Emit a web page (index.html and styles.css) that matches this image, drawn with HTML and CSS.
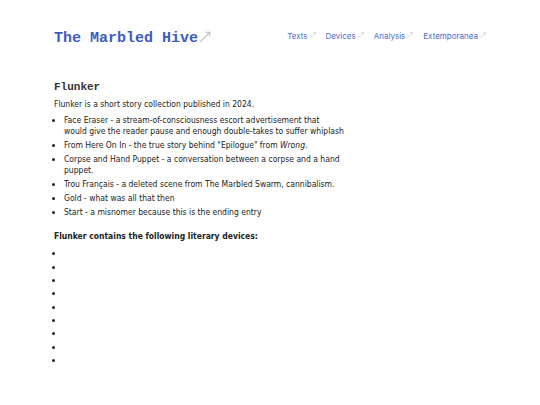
FILE: index.html
```html
<!DOCTYPE html>
<html>
<head>
<meta charset="utf-8">
<link rel="stylesheet" href="styles.css">
</head>
<body>
<header class="site-header">
  <a class="brand" href="#">The Marbled Hive<svg class="ext ext-brand" viewBox="0 0 10 10"><path d="M1 9 L9 1 M5.5 1 H9 V4.5" /></svg></a>
  <nav class="nav">
    <a href="#">Texts<svg class="ext" viewBox="0 0 10 10"><path d="M1 9 L9 1 M5.5 1 H9 V4.5" /></svg></a>
    <a href="#">Devices<svg class="ext" viewBox="0 0 10 10"><path d="M1 9 L9 1 M5.5 1 H9 V4.5" /></svg></a>
    <a href="#">Analysis<svg class="ext" viewBox="0 0 10 10"><path d="M1 9 L9 1 M5.5 1 H9 V4.5" /></svg></a>
    <a href="#">Extemporanea<svg class="ext" viewBox="0 0 10 10"><path d="M1 9 L9 1 M5.5 1 H9 V4.5" /></svg></a>
  </nav>
</header>
<main class="content">
  <h1 class="title">Flunker</h1>
  <p class="intro">Flunker is a short story collection published in 2024.</p>
  <ul class="stories">
    <li>Face Eraser - a stream-of-consciousness escort advertisement that<br>would give the reader pause and enough double-takes to suffer whiplash</li>
    <li>From Here On In - the true story behind "Epilogue" from <em>Wrong</em>.</li>
    <li>Corpse and Hand Puppet - a conversation between a corpse and a hand puppet.</li>
    <li>Trou Français - a deleted scene from The Marbled Swarm, cannibalism.</li>
    <li>Gold - what was all that then</li>
    <li>Start - a misnomer because this is the ending entry</li>
  </ul>
  <h2 class="subtitle">Flunker contains the following literary devices:</h2>
  <ul class="devices">
    <li></li><li></li><li></li><li></li><li></li><li></li><li></li><li></li><li></li>
  </ul>
</main>
</body>
</html>
```
FILE: styles.css
```css
html, body { margin: 0; padding: 0; background: #fff; }
body {
  font-family: "DejaVu Sans Condensed", "DejaVu Sans", Verdana, sans-serif;
  color: #222;
  font-size: 8.5px;
}
a { text-decoration: none; }
.site-header {
  display: flex;
  justify-content: space-between;
  align-items: flex-start;
  padding: 31px 54px 0 54px;
}
.brand {
  font-family: "Liberation Mono", "Courier New", monospace;
  font-weight: bold;
  font-size: 15px;
  color: #3c5cc4;
  display: flex;
  align-items: flex-start;
  line-height: 16px;
}
.ext {
  width: 7px;
  height: 7px;
  fill: none;
  stroke: #c4c8d4;
  stroke-width: 0.9;
  margin-left: 1px;
}
.ext-brand {
  width: 12px;
  height: 12px;
  margin-top: 0;
  stroke: #b8bcc8;
}
.nav {
  display: flex;
  gap: 10px;
  padding-top: 0;
}
.nav a {
  font-family: Inter, "Noto Sans", sans-serif;
  font-size: 8px;
  color: #4d6bd0;
  display: flex;
  align-items: flex-start;
  line-height: 10px;
}
.nav .ext { margin-top: 1px; }
.content { padding: 0 54px; }
.title {
  font-family: "Liberation Mono", "Courier New", monospace;
  font-weight: bold;
  font-size: 11px;
  margin: 33px 0 0 0;
  line-height: 14px;
  color: #333;
}
.intro { margin: 4px 0 0 0; line-height: 12px; }
.stories {
  margin: 4.5px 0 0 0;
  padding-left: 10px;
  width: 285px;
  line-height: 11px;
}
.stories li { margin-bottom: 3.2px; }
.subtitle {
  font-size: 8.5px;
  font-weight: bold;
  margin: 12px 0 0 0;
  line-height: 12px;
}
.devices {
  margin: 5px 0 0 0;
  padding-left: 10px;
  line-height: 13.3px;
}
.devices li { height: 13.3px; }
```
